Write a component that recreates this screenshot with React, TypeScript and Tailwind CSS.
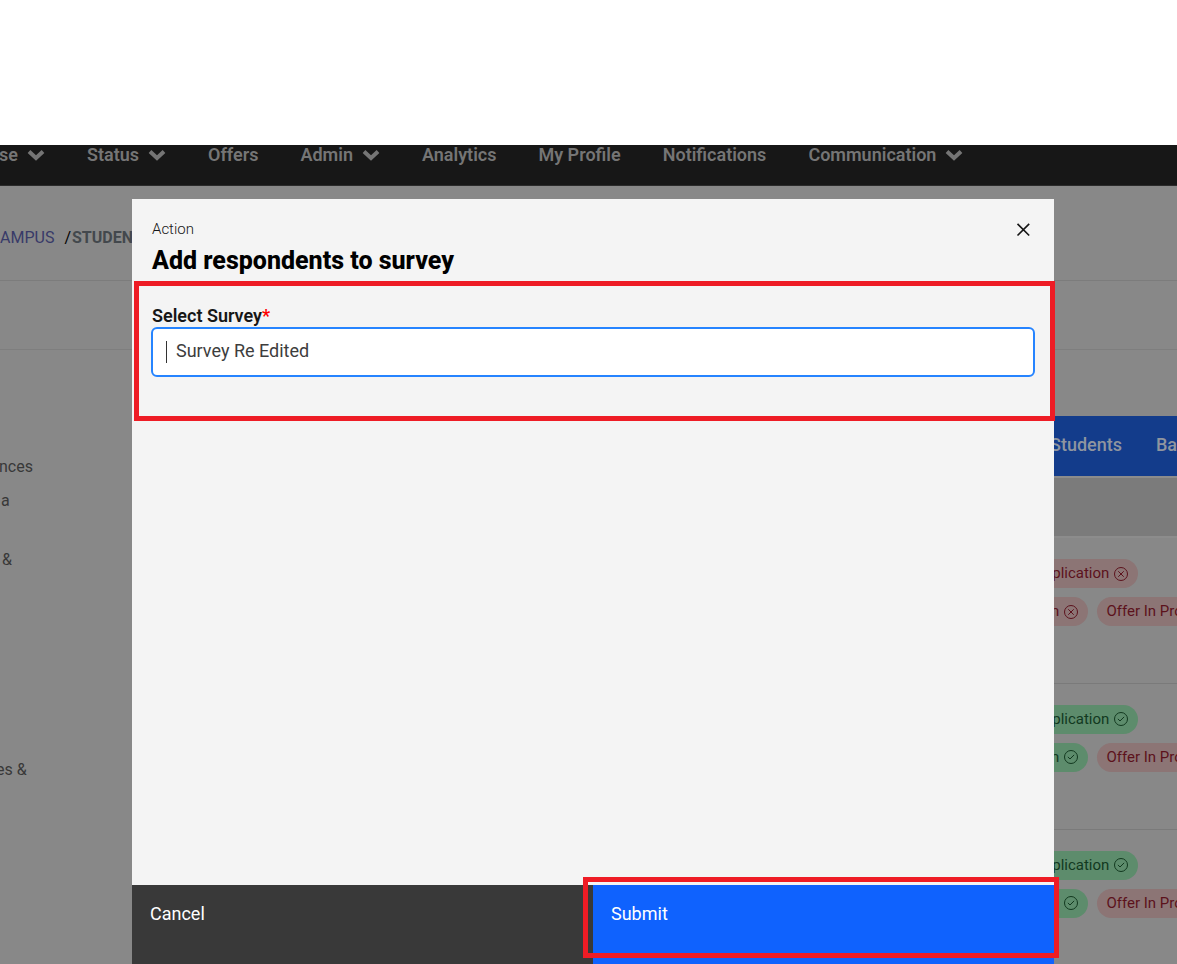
import React, { useState } from "react";

interface NavItem {
  label: string;
  hasMenu?: boolean;
}

interface StudentRow {
  id: number;
  completed: boolean;
}

const navItems: NavItem[] = [
  { label: "se", hasMenu: true },
  { label: "Status", hasMenu: true },
  { label: "Offers" },
  { label: "Admin", hasMenu: true },
  { label: "Analytics" },
  { label: "My Profile" },
  { label: "Notifications" },
  { label: "Communication", hasMenu: true },
];

const students: StudentRow[] = [
  { id: 1, completed: false },
  { id: 2, completed: true },
  { id: 3, completed: true },
];

const Chevron = () => (
  <svg viewBox="0 0 18 12" className="h-3 w-[18px] shrink-0" fill="none" stroke="currentColor" strokeWidth="4">
    <path d="M2 2.5 9 9l7-6.5" />
  </svg>
);

const StatusIcon = ({ ok }: { ok: boolean }) => (
  <svg viewBox="0 0 32 32" className="size-4 shrink-0" fill="none" stroke="currentColor" strokeWidth="2">
    <circle cx="16" cy="16" r="13" />
    {ok ? <path d="M9.7 15.7 14 20l8.3-8.3" /> : <path d="m10.5 10.5 11 11m0-11-11 11" />}
  </svg>
);

const Chip = ({ label, ok, icon = true }: { label: string; ok: boolean; icon?: boolean }) => (
  <span
    className={`flex h-[29px] shrink-0 items-center gap-1 rounded-full px-[9px] text-[15px] whitespace-nowrap ${
      ok ? "bg-[#5d8c6c] text-[#12391f]" : "bg-[#8c7575] text-[#5c121c]"
    }`}
  >
    {label}
    {icon && <StatusIcon ok={ok} />}
  </span>
);

const Navbar = () => (
  <nav className="flex h-[41px] gap-[42px] border-b border-[#2b2b2b] bg-[#171717] text-lg leading-5 font-semibold text-[#757575]">
    {navItems.map((item) => (
      <a key={item.label} href="#" className="flex h-[19px] shrink-0 items-center gap-[9px] first:-ml-px">
        {item.label}
        {item.hasMenu && <Chevron />}
      </a>
    ))}
  </nav>
);

const StudentsTable = () => (
  <table className="w-full table-fixed text-left">
    <thead>
      <tr className="h-[61px] bg-[#133c8b] text-lg text-[#8f959f]">
        <th className="w-[131px] pb-[2px] pl-[25px] font-medium">Students</th>
        <th className="pb-[2px] font-medium">Ba</th>
      </tr>
      <tr className="h-[60px] border-y-2 border-[#8c8c8c] bg-[#7b7b7b]">
        <td colSpan={2} />
      </tr>
    </thead>
    <tbody>
      {students.map((row) => (
        <tr key={row.id} className="h-[146px] border-b border-[#7a7a7a]">
          <td colSpan={2} className="pt-[21px] align-top">
            <div className="flex flex-col gap-[9px]">
              <div className="flex">
                <Chip label="Application" ok={row.completed} />
              </div>
              <div className="flex gap-[9px]">
                <Chip label="tion" ok={row.completed} />
                <Chip label="Offer In Pro" ok={false} icon={false} />
              </div>
            </div>
          </td>
        </tr>
      ))}
    </tbody>
  </table>
);

const Background = () => (
  <div className="bg-[#888888]">
    <Navbar />
    <div className="flex h-[95px] items-center border-b border-[#7c7c7c] pt-[10px] text-base">
      <a href="#" className="text-[#383a68]">AMPUS</a>
      <span className="ml-[10px] text-black">/</span>
      <span className="pl-px font-bold text-[#43484d]">STUDENTS</span>
    </div>
    <div className="h-[69px] border-b border-[#7e7e7e]" />
    <main className="flex">
      <aside className="flex w-[132px] shrink-0 flex-col pt-[105px] text-base text-[#383838]">
        <span className="-ml-px">nces</span>
        <span className="mt-[10px] pl-px">a</span>
        <span className="mt-[35px] pl-[2px]">&amp;</span>
        <span className="mt-[186px] -ml-1">es &amp;</span>
      </aside>
      <section className="flex flex-1 justify-end overflow-hidden pt-[66px]">
        <div className="w-[152px]">
          <StudentsTable />
        </div>
      </section>
    </main>
  </div>
);

const SurveyModal = () => {
  const [survey, setSurvey] = useState("Survey Re Edited");

  return (
    <div role="dialog" aria-labelledby="modal-title" className="flex flex-1 flex-col bg-[#f4f4f4]">
      <header className="flex h-[82px] items-start justify-between px-5 pt-5">
        <div>
          <p className="text-[15px] leading-5 font-light text-[#161616]">Action</p>
          <h2 id="modal-title" className="mt-1 text-[25px] leading-9 font-extrabold text-black">
            Add respondents to survey
          </h2>
        </div>
        <button aria-label="Close" className="text-[#161616]">
          <svg viewBox="0 0 32 32" className="size-[22px]" fill="none" stroke="currentColor" strokeWidth="2.4">
            <path d="m8 7 17 17m0-17-17 17" />
          </svg>
        </button>
      </header>

      <div className="relative h-[140px] px-[19px] pt-[23px]">
        <div className="pointer-events-none absolute inset-y-0 -right-px left-[2px] border-[5px] border-[#ee1c25]" />
        <label htmlFor="survey" className="block pl-px text-lg leading-[23px] font-semibold text-[#161616]">
          Select Survey<span className="text-[#ff0000]">*</span>
        </label>
        <div className="flex h-[50px] items-center rounded-md border-2 border-[#2684ff] bg-white px-[13px]">
          <span className="h-[22px] w-px bg-[#333333]" />
          <input
            id="survey"
            value={survey}
            onChange={(e) => setSurvey(e.target.value)}
            className="ml-[9px] flex-1 pb-[2px] text-lg text-[#3d3d3d] outline-none"
          />
        </div>
      </div>

      <footer className="mt-auto flex h-[79px] text-lg leading-6 text-white">
        <button className="flex w-1/2 items-start bg-[#393939] pt-[17px] pl-[18px]">Cancel</button>
        <div className="relative flex w-1/2">
          <button className="flex flex-1 items-start bg-[#0f62fe] pt-[17px] pl-[18px]">Submit</button>
          <div className="pointer-events-none absolute -top-2 -right-[5px] bottom-[6px] -left-[10px] border-[5px] border-[#ee1c25]" />
        </div>
      </footer>
    </div>
  );
};

const App: React.FC = () => {
  return (
    <div className="flex h-screen flex-col bg-white pt-[145px] font-['Roboto',sans-serif]">
      <div className="relative flex-1 overflow-hidden bg-[#888888]">
        <Background />
        <div className="absolute inset-0 flex pt-[54px] pr-[123px] pl-[132px]">
          <SurveyModal />
        </div>
      </div>
    </div>
  );
};

export default App;
